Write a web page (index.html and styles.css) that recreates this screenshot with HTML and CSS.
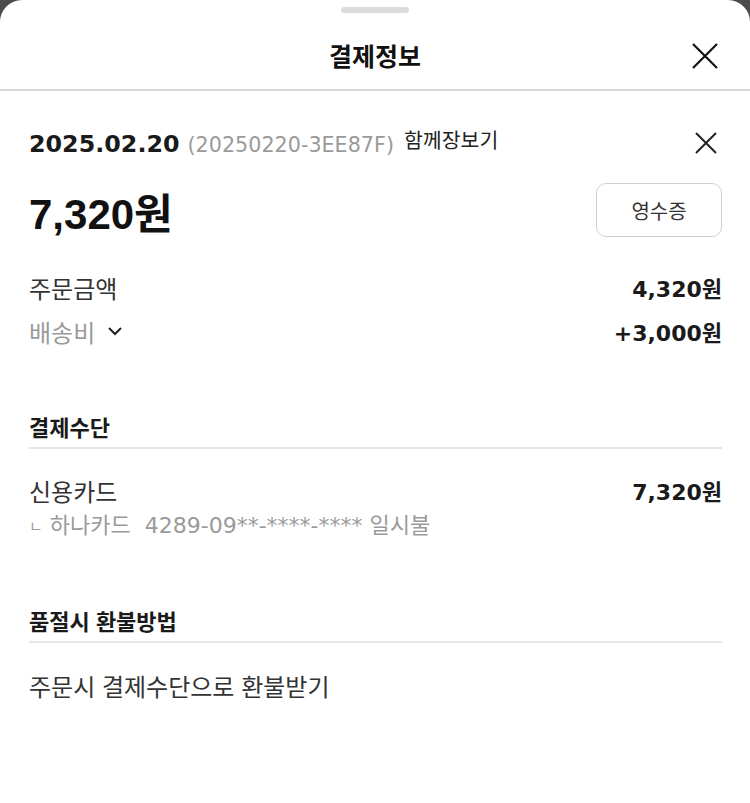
FILE: index.html
```html
<!DOCTYPE html>
<html lang="ko">
<head>
<meta charset="utf-8">
<title>결제정보</title>
<link rel="stylesheet" href="styles.css">
</head>
<body>
<div class="sheet">
  <div class="handle"></div>
  <header class="header">
    <h1 class="title">결제정보</h1>
    <button class="close-btn" aria-label="닫기">
      <svg width="26" height="26" viewBox="0 0 26 26"><path d="M1 1L25 25M25 1L1 25" stroke="#111" stroke-width="2.2" fill="none"/></svg>
    </button>
  </header>
  <main class="content">
    <div class="order-head">
      <div class="order-meta">
        <span class="date">2025.02.20</span>
        <span class="code">(20250220-3EE87F)</span>
        <span class="service">함께장보기</span>
      </div>
      <button class="small-close" aria-label="닫기">
        <svg width="22" height="22" viewBox="0 0 22 22"><path d="M1 1L21 21M21 1L1 21" stroke="#222" stroke-width="2" fill="none"/></svg>
      </button>
    </div>
    <div class="total-row">
      <span class="total">7,320원</span>
      <button class="receipt">영수증</button>
    </div>
    <div class="row first">
      <span class="label">주문금액</span>
      <span class="value">4,320원</span>
    </div>
    <div class="row">
      <span class="label muted">배송비
        <svg class="chev" width="16" height="10" viewBox="0 0 16 10"><path d="M2 2L8 8L14 2" stroke="#222" stroke-width="2" fill="none"/></svg>
      </span>
      <span class="value">+3,000원</span>
    </div>

    <section class="section pay">
      <h2 class="section-title">결제수단</h2>
      <div class="row card-row">
        <span class="label">신용카드</span>
        <span class="value">7,320원</span>
      </div>
      <div class="sub"><span class="jamo">ㄴ</span> 하나카드&nbsp; 4289-09**-****-**** 일시불</div>
    </section>

    <section class="section refund">
      <h2 class="section-title">품절시 환불방법</h2>
      <div class="row refund-row">
        <span class="label">주문시 결제수단으로 환불받기</span>
      </div>
    </section>
  </main>
</div>
</body>
</html>
```
FILE: styles.css
```css
* { box-sizing: border-box; }
html, body { margin: 0; padding: 0; }
body {
  background: #4b4b4b;
  font-family: "DejaVu Sans", "Noto Sans CJK KR", sans-serif;
  color: #222;
  height: 803px;
  overflow: hidden;
}
.sheet {
  background: #fff;
  border-radius: 22px 22px 0 0;
  height: 803px;
  padding-top: 7px;
  position: relative;
}
.handle {
  width: 68px;
  height: 6px;
  border-radius: 3px;
  background: #dcdcdc;
  margin: 0 auto;
}
.header {
  height: 78px;
  padding-top: 8px;
  display: flex;
  align-items: center;
  justify-content: center;
  border-bottom: 2px solid #d7dbde;
  position: relative;
}
.title {
  margin: 0;
  font-family: "Noto Sans CJK KR", sans-serif;
  font-size: 25px;
  font-weight: 700;
  color: #111;
  line-height: 34px;
}
.close-btn {
  position: absolute;
  right: 32px;
  top: 30px;
  border: 0;
  background: none;
  padding: 0;
  width: 26px;
  height: 26px;
}
.close-btn svg, .small-close svg { display: block; }
.content {
  padding: 0 28px 0 29px;
}
.order-head {
  display: flex;
  justify-content: space-between;
  align-items: center;
  margin-top: 37px;
  height: 30px;
}
.order-meta {
  display: flex;
  align-items: baseline;
}
.date {
  font-size: 23.8px;
  font-weight: 700;
  color: #1a1a1a;
}
.code {
  font-size: 20.7px;
  color: #9a9a9a;
  margin-left: 8px;
}
.service {
  font-family: "Noto Sans CJK KR", sans-serif;
  font-size: 20.5px;
  color: #222;
  margin-left: 10px;
  position: relative;
  top: -4px;
}
.small-close {
  border: 0;
  background: none;
  padding: 0;
  margin-right: 5px;
  width: 22px;
  height: 22px;
}
.total-row {
  display: flex;
  justify-content: space-between;
  align-items: center;
  margin-top: 24px;
  height: 56px;
}
.total {
  font-family: "Liberation Sans", "Noto Sans CJK KR", sans-serif;
  font-size: 42px;
  font-weight: 700;
  color: #111;
}
.receipt {
  width: 126px;
  height: 54px;
  border: 1.5px solid #d0d0d0;
  border-radius: 10px;
  background: #fff;
  font-family: "Noto Sans CJK KR", sans-serif;
  font-size: 20px;
  color: #333;
  padding: 0;
}
.row {
  display: flex;
  justify-content: space-between;
  align-items: center;
  height: 44px;
}
.row.first { margin-top: 27px; }
.label {
  font-family: "Noto Sans CJK KR", sans-serif;
  font-size: 24px;
  color: #333;
  display: flex;
  align-items: center;
}
.label.muted { color: #9a9a9a; }
.chev { margin-left: 12px; }
.value {
  font-size: 22px;
  font-weight: 700;
  color: #1a1a1a;
}
.section-title {
  margin: 0;
  font-family: "Noto Sans CJK KR", sans-serif;
  font-size: 22px;
  font-weight: 700;
  color: #1a1a1a;
  height: 46px;
  padding-top: 6px;
  line-height: 34px;
  border-bottom: 2px solid #e6e6e6;
}
.pay { margin-top: 50px; }
.card-row { margin-top: 20px; height: 42px; }
.sub {
  font-size: 22px;
  color: #9a9a9a;
  height: 30px;
  line-height: 30px;
  white-space: nowrap;
}
.jamo {
  font-family: "Noto Sans CJK KR", sans-serif;
  font-size: 15px;
  vertical-align: 1px;
}
.refund { margin-top: 56px; }
.refund-row { margin-top: 20px; }
```
